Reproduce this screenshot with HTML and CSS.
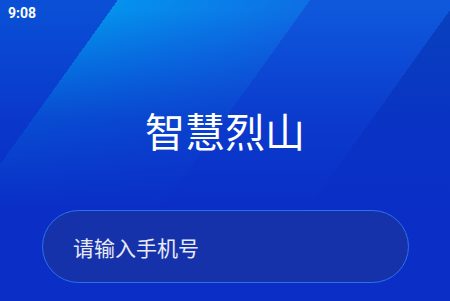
FILE: index.html
```html
<!DOCTYPE html>
<html lang="zh-CN">
<head>
<meta charset="utf-8">
<title>智慧烈山</title>
<link rel="stylesheet" href="styles.css">
</head>
<body>
<div class="screen">
  <div class="status">9:08</div>
  <h1 class="title">智慧烈山</h1>
  <div class="field">
    <span class="placeholder">请输入手机号</span>
  </div>
</div>
</body>
</html>
```
FILE: styles.css
```css
html, body {
  margin: 0;
  padding: 0;
}
body {
  width: 450px;
  height: 301px;
  overflow: hidden;
  font-family: "Noto Sans CJK SC", "Noto Sans", sans-serif;
}
.screen {
  height: 301px;
  display: flex;
  flex-direction: column;
  background:
    linear-gradient(180deg, rgba(10,46,198,0) 0px, rgba(10,46,198,0) 10px, rgba(10,46,198,0.7) 120px, #0a2ec6 210px),
    linear-gradient(125.6deg,
      rgba(0,0,0,0) 0 17.7%,
      rgba(0,200,255,0.55) 17.7%,
      rgba(20,170,255,0.35) 46.6%,
      rgba(40,140,255,0.14) 46.6% 68.7%,
      rgba(0,0,80,0.18) 68.7%),
    #0a4fd6;
}
.status {
  padding: 4px 0 0 8px;
  height: 18px;
  font-family: Roboto, "Liberation Sans", sans-serif;
  font-weight: 700;
  font-size: 14px;
  line-height: 18px;
  color: #ffffff;
}
.title {
  margin: 85px 0 0;
  text-align: center;
  font-size: 40px;
  font-weight: 400;
  line-height: 46px;
  color: #ffffff;
  letter-spacing: 0;
}
.field {
  margin: 57px 41px 0 42px;
  height: 71px;
  border: 1px solid #2a72ec;
  border-radius: 37px;
  background: #1632aa;
  display: flex;
  align-items: center;
  padding-left: 30px;
}
.placeholder {
  font-size: 21px;
  line-height: 24px;
  color: #e8eaf6;
  font-weight: 400;
}
```
